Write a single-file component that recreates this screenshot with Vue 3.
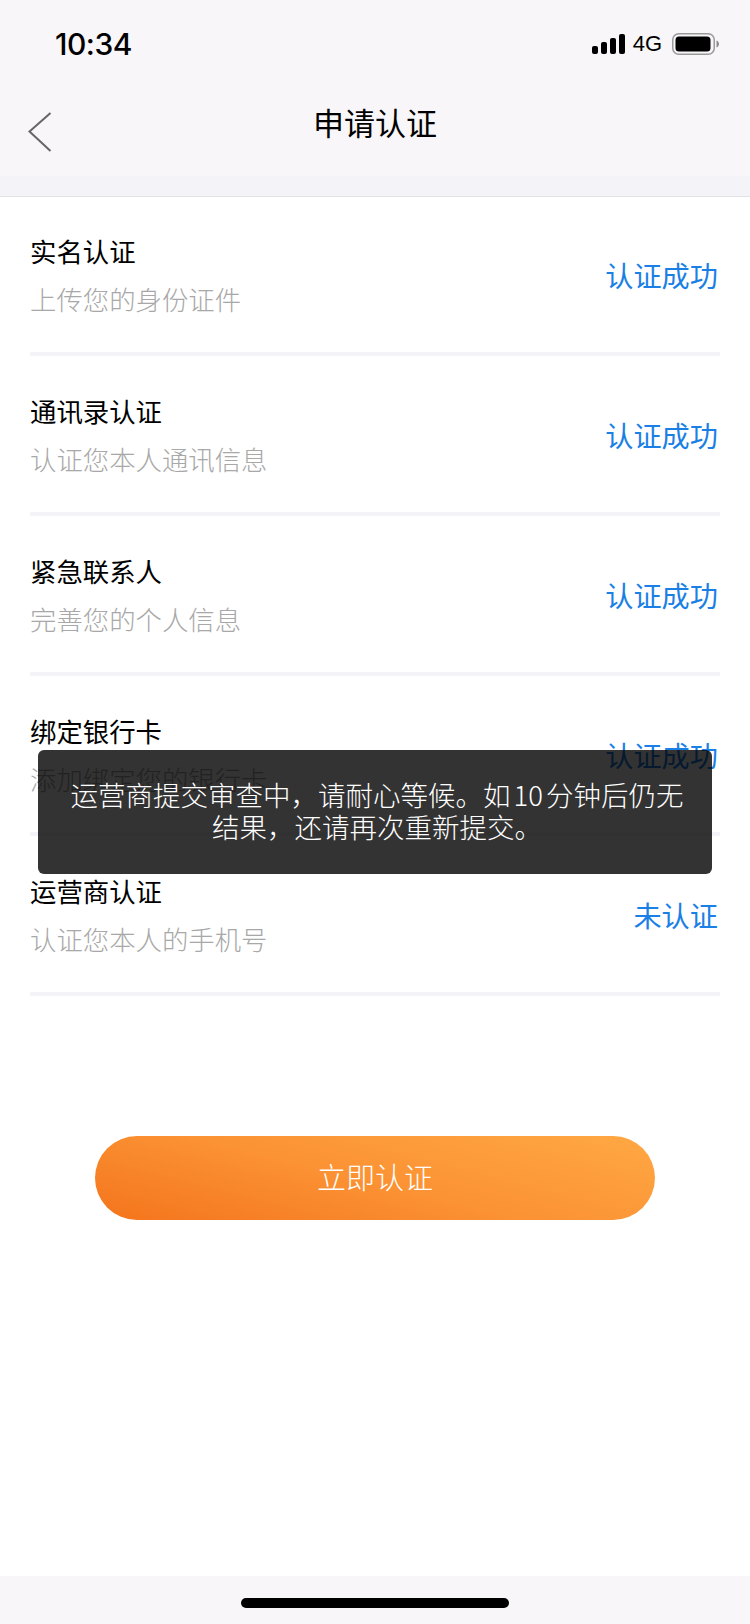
<template>
  <div class="page">
    <header class="top">
      <div class="status">
        <span class="time">10:34</span>
        <div class="status-right">
          <svg class="signal" width="33" height="20" viewBox="0 0 33 20">
            <rect x="0" y="12" width="6" height="8" rx="2" />
            <rect x="9" y="8" width="6" height="12" rx="2" />
            <rect x="18" y="4" width="6" height="16" rx="2" />
            <rect x="27" y="0" width="6" height="20" rx="2" />
          </svg>
          <span class="net">4G</span>
          <svg class="battery" width="47" height="22" viewBox="0 0 47 22">
            <rect x="0.75" y="0.75" width="41.5" height="20.5" rx="6" fill="none" stroke="#9a9a9a" stroke-width="1.5" />
            <rect x="3.5" y="3.5" width="35" height="15" rx="3.5" fill="#000" />
            <path d="M44.5 7.5c1.6.6 2.500 2 2.500 3.500s-.9 2.900-2.500 3.500z" fill="#8c8c8c" />
          </svg>
        </div>
      </div>
      <div class="nav">
        <svg class="back" width="24" height="40" viewBox="0 0 24 40">
          <path d="M22.500 1 1.500 19.500 22.500 39" fill="none" stroke="#666" stroke-width="2" />
        </svg>
        <h1 class="title">申请认证</h1>
      </div>
    </header>

    <main class="content">
      <div class="row" v-for="item in items" :key="item.name">
        <div class="row-text">
          <div class="name">{{ item.name }}</div>
          <div class="desc">{{ item.desc }}</div>
        </div>
        <span class="state">{{ item.state }}</span>
      </div>

      <div class="btn-wrap">
        <button class="submit">立即认证</button>
      </div>
    </main>

    <footer class="home">
      <span class="home-bar"></span>
    </footer>

    <div class="toast">运营商提交审查中，请耐心等候。如<span class="num">10</span>分钟后仍无结果，还请再次重新提交。</div>
  </div>
</template>

<script setup>
const items = [
  { name: '实名认证', desc: '上传您的身份证件', state: '认证成功' },
  { name: '通讯录认证', desc: '认证您本人通讯信息', state: '认证成功' },
  { name: '紧急联系人', desc: '完善您的个人信息', state: '认证成功' },
  { name: '绑定银行卡', desc: '添加绑定您的银行卡', state: '认证成功' },
  { name: '运营商认证', desc: '认证您本人的手机号', state: '未认证' },
]
</script>

<style>
html,
body {
  margin: 0;
  background: #fff;
}
</style>

<style scoped>
.page {
  position: relative;
  display: flex;
  flex-direction: column;
  width: 750px;
  height: 1624px;
  overflow: hidden;
  background: #fff;
  font-family: "Noto Sans CJK SC", "Liberation Sans", sans-serif;
  font-weight: 300;
  color: #000;
}

.top {
  background: #f8f6f8;
  border-bottom: 20px solid #f3f3f8;
  box-shadow: 0 1px 0 #e2e2e6;
}

.status {
  display: flex;
  align-items: center;
  justify-content: space-between;
  height: 88px;
  padding: 0 31px 0 55px;
}

.time {
  font-family: Inter, "Liberation Sans", sans-serif;
  font-size: 30px;
  font-weight: 500;
  letter-spacing: -0.5px;
}

.status-right {
  display: flex;
  align-items: center;
}

.signal {
  margin-right: 8px;
}

.net {
  font-family: "Liberation Sans", sans-serif;
  font-size: 22px;
  font-weight: 400;
  margin-right: 10px;
}

.nav {
  position: relative;
  display: flex;
  justify-content: center;
  height: 88px;
}

.back {
  position: absolute;
  left: 28px;
  top: 24px;
}

.title {
  margin: 0;
  font-size: 31px;
  font-weight: 400;
  line-height: 68px;
}

.content {
  flex: 1;
  padding: 0 30px;
}

.row {
  display: flex;
  align-items: center;
  justify-content: space-between;
  box-sizing: border-box;
  height: 160px;
  padding-top: 2px;
  border-bottom: 4px solid #f3f3f8;
}

.name {
  font-size: 26.400px;
  font-weight: 400;
  line-height: 36px;
}

.desc {
  margin-top: 12px;
  font-size: 26.400px;
  line-height: 36px;
  color: #a8a8a8;
}

.state {
  margin-bottom: 2px;
  padding-right: 2px;
  font-size: 28.200px;
  font-weight: 400;
  color: #1a80e6;
}

.btn-wrap {
  display: flex;
  justify-content: center;
  padding-top: 140px;
}

.submit {
  width: 560px;
  height: 84px;
  padding: 0 0 4px;
  border: 0;
  border-radius: 42px;
  background: linear-gradient(14deg, #f4741c 0%, #fb9234 48%, #ffa844 100%);
  font-family: inherit;
  font-size: 29px;
  font-weight: 300;
  color: #fff;
}

.home {
  display: flex;
  justify-content: center;
  height: 48px;
  padding-top: 22px;
  box-sizing: border-box;
  background: #f8f6f8;
}

.home-bar {
  width: 268px;
  height: 10px;
  border-radius: 5px;
  background: #000;
}

.toast {
  position: absolute;
  left: 38px;
  top: 750px;
  box-sizing: border-box;
  width: 674px;
  height: 124px;
  padding: 28px 24px 28px 28px;
  border-radius: 6px;
  background: rgba(0, 0, 0, 0.8);
  color: #fff;
  font-size: 27.500px;
  line-height: 32px;
  text-align: center;
}

.num {
  margin: 0 3px;
}
</style>
